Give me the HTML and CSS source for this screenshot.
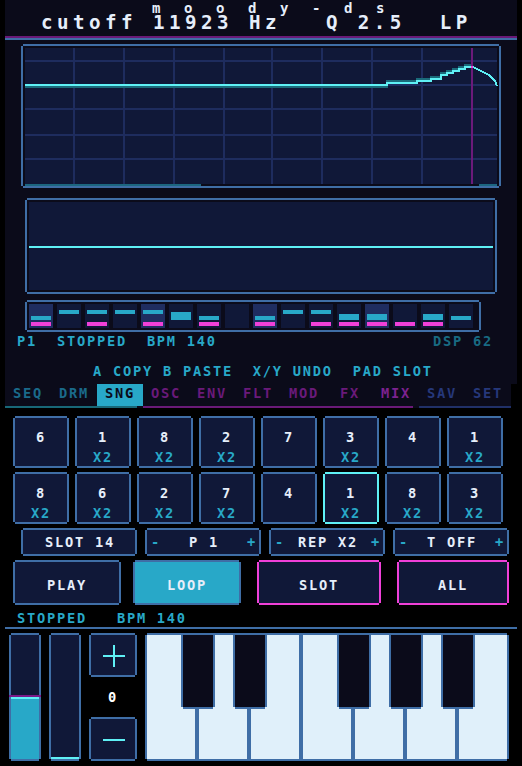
FILE: index.html
```html
<!DOCTYPE html>
<html lang="en">
<head>
<meta charset="utf-8">
<title>moody-ds</title>
<link rel="stylesheet" href="styles.css">
</head>
<body>
<div class="screen">
  <section class="top">
    <div class="deck">
      <div class="title">m o o d y - d s</div>
      <div class="readout"><span>cutoff 11923 Hz</span><span class="ro-q">Q 2.5</span><span class="ro-mode">LP</span></div>
      <div class="rule rule-purple"></div>
      <div class="rule rule-blue"></div>

      <div class="scope px">
        <svg width="476" height="140" viewBox="23 46 476 140" shape-rendering="crispEdges">
          <rect x="23" y="46" width="476" height="140" fill="#0b0b1a"/>
          <rect x="25" y="48" width="472" height="136" fill="#101838"/>
          <g fill="#1e2c5e">
            <rect x="73" y="48" width="2" height="136"/>
            <rect x="123" y="48" width="2" height="136"/>
            <rect x="173" y="48" width="2" height="136"/>
            <rect x="223" y="48" width="2" height="136"/>
            <rect x="271" y="48" width="2" height="136"/>
            <rect x="321" y="48" width="2" height="136"/>
            <rect x="371" y="48" width="2" height="136"/>
            <rect x="421" y="48" width="2" height="136"/>
            <rect x="25" y="60" width="472" height="2"/>
            <rect x="25" y="84" width="472" height="2"/>
            <rect x="25" y="108" width="472" height="2"/>
            <rect x="25" y="134" width="472" height="2"/>
            <rect x="25" y="158" width="472" height="2"/>
          </g>
          <rect x="471" y="48" width="2" height="136" fill="#6c1a7a"/>
          <rect x="25" y="184" width="176" height="2" fill="#1c6680"/>
          <rect x="479" y="184" width="18" height="2" fill="#1c6680"/>
          <path d="M25 87 H388 M386 81 H417 V79 H431 V77 H441 V73 H447 V71 H453 V69 H459 V67 H465 V65 H471" fill="none" stroke="#1a6a7a" stroke-width="2"/>
          <path d="M25 85 H387 V83 H417 V81 H431 V79 H441 V75 H447 V73 H453 V71 H459 V69 H465 V67 H473 L477 69 L481 71 L485 73 L489 75 L491 77 L493 79 L495 81 L497 86" fill="none" stroke="#5ff0f5" stroke-width="2"/>
          <rect x="471" y="66" width="2" height="2" fill="#f040d8"/>
        </svg>
      </div>

      <div class="wave px"><div class="wave-in"><div class="wave-line"></div></div></div>

      <div class="steps px">
        <div class="step beat"><i class="note" style="margin-top:12px;height:4px"></i><i class="vel"></i></div>
        <div class="step"><i class="note" style="margin-top:6px;height:4px"></i></div>
        <div class="step"><i class="note" style="margin-top:6px;height:4px"></i><i class="vel"></i></div>
        <div class="step"><i class="note" style="margin-top:6px;height:4px"></i></div>
        <div class="step beat"><i class="note" style="margin-top:6px;height:4px"></i><i class="vel"></i></div>
        <div class="step"><i class="note" style="margin-top:8px;height:8px"></i></div>
        <div class="step"><i class="note" style="margin-top:12px;height:4px"></i><i class="vel"></i></div>
        <div class="step"></div>
        <div class="step beat"><i class="note" style="margin-top:12px;height:4px"></i><i class="vel"></i></div>
        <div class="step"><i class="note" style="margin-top:6px;height:4px"></i></div>
        <div class="step"><i class="note" style="margin-top:6px;height:4px"></i><i class="vel"></i></div>
        <div class="step"><i class="note" style="margin-top:10px;height:6px"></i><i class="vel"></i></div>
        <div class="step beat"><i class="note" style="margin-top:10px;height:6px"></i><i class="vel"></i></div>
        <div class="step"><i class="vel"></i></div>
        <div class="step"><i class="note" style="margin-top:10px;height:6px"></i><i class="vel"></i></div>
        <div class="step"><i class="note" style="margin-top:12px;height:4px"></i></div>
      </div>

      <div class="status"><span>P1  STOPPED  BPM 140</span><span class="dsp">DSP 62</span></div>
      <div class="hints">A COPY B PASTE  X/Y UNDO  PAD SLOT</div>
    </div>

    <nav class="tabs">
      <span class="tab t-seq">SEQ</span>
      <span class="tab t-seq">DRM</span>
      <span class="tab active">SNG</span>
      <span class="tab t-syn">OSC</span>
      <span class="tab t-syn">ENV</span>
      <span class="tab t-syn">FLT</span>
      <span class="tab t-syn">MOD</span>
      <span class="tab t-syn">FX</span>
      <span class="tab t-mix">MIX</span>
      <span class="tab t-sys">SAV</span>
      <span class="tab t-sys">SET</span>
    </nav>
    <div class="tab-lines"><i class="tl-seq"></i><i class="tl-syn"></i><i class="tl-sys"></i></div>
  </section>

  <section class="song">
    <div class="pads">
      <div class="pad px"><span>6</span></div>
      <div class="pad px"><span>1</span><span class="rep">X2</span></div>
      <div class="pad px"><span>8</span><span class="rep">X2</span></div>
      <div class="pad px"><span>2</span><span class="rep">X2</span></div>
      <div class="pad px"><span>7</span></div>
      <div class="pad px"><span>3</span><span class="rep">X2</span></div>
      <div class="pad px"><span>4</span></div>
      <div class="pad px"><span>1</span><span class="rep">X2</span></div>
      <div class="pad px"><span>8</span><span class="rep">X2</span></div>
      <div class="pad px"><span>6</span><span class="rep">X2</span></div>
      <div class="pad px"><span>2</span><span class="rep">X2</span></div>
      <div class="pad px"><span>7</span><span class="rep">X2</span></div>
      <div class="pad px"><span>4</span></div>
      <div class="pad px sel"><span>1</span><span class="rep">X2</span></div>
      <div class="pad px"><span>8</span><span class="rep">X2</span></div>
      <div class="pad px"><span>3</span><span class="rep">X2</span></div>
    </div>

    <div class="params">
      <div class="param px center"><span>SLOT 14</span></div>
      <div class="param px"><span class="pm">-</span><span>P 1</span><span class="pm">+</span></div>
      <div class="param px"><span class="pm">-</span><span>REP X2</span><span class="pm">+</span></div>
      <div class="param px"><span class="pm">-</span><span>T OFF</span><span class="pm">+</span></div>
    </div>

    <div class="transport">
      <div class="btn px b-play">PLAY</div>
      <div class="btn px b-loop">LOOP</div>
      <div class="btn px b-slot b-mag">SLOT</div>
      <div class="btn px b-all b-mag">ALL</div>
    </div>

    <div class="status2">STOPPED   BPM 140</div>
    <div class="divider"></div>

    <div class="play">
      <div class="slider px"><i class="mark"></i><i class="level" style="height:62px"></i></div>
      <div class="slider px"><i class="level-min"></i></div>
      <div class="octave">
        <div class="oct-btn px">
          <svg width="44" height="40" viewBox="0 0 44 40" shape-rendering="crispEdges"><rect x="22" y="10" width="2" height="22" fill="#5ff0f5"/><rect x="12" y="20" width="22" height="2" fill="#5ff0f5"/></svg>
        </div>
        <span class="oct-val">0</span>
        <div class="oct-btn px">
          <svg width="44" height="40" viewBox="0 0 44 40" shape-rendering="crispEdges"><rect x="12" y="20" width="22" height="2" fill="#5ff0f5"/></svg>
        </div>
      </div>
      <div class="keys px">
        <i class="white"></i><i class="white"></i><i class="white"></i><i class="white"></i><i class="white"></i><i class="white"></i><i class="white"></i>
        <i class="black k1"></i><i class="black k2"></i><i class="black k3"></i><i class="black k4"></i><i class="black k5"></i>
      </div>
    </div>
  </section>
</div>
</body>
</html>
```

FILE: styles.css
```css
* {
  box-sizing: border-box;
  margin: 0;
  padding: 0;
}

html,
body {
  background: #000;
}

body {
  width: 522px;
  height: 766px;
  overflow: hidden;
  font-family: "DejaVu Sans Mono", "Liberation Mono", monospace;
  font-weight: bold;
  color: #e6eefa;
}

/* small pixel-style caption text: 10px cell advance, 10px cap height */
.screen {
  font-size: 13.7px;
  letter-spacing: 1.75px;
  line-height: 10px;
}

/* runs of spaces are part of the column layout of these lines */
.title,
.readout,
.status,
.hints,
.status2,
.param,
.btn {
  white-space: pre;
}

i {
  display: block;
}

/* stepped corners on framed widgets */
.px {
  clip-path: polygon(2px 0, calc(100% - 2px) 0, calc(100% - 2px) 2px, 100% 2px,
    100% calc(100% - 2px), calc(100% - 2px) calc(100% - 2px), calc(100% - 2px) 100%,
    2px 100%, 2px calc(100% - 2px), 0 calc(100% - 2px), 0 2px, 2px 2px);
}

/* ---------- upper deck ---------- */
.top {
  margin-left: 5px;
}

.deck {
  width: 512px;
  background: #0b0b1a;
  padding-bottom: 8px;
}

.title {
  height: 15px;
  line-height: 16px;
  font-size: 14px;
  letter-spacing: 7.57px;
  padding-left: 147px;
}

.readout {
  display: flex;
  height: 15px;
  line-height: 15px;
  font-size: 19.2px;
  letter-spacing: 4.44px;
  padding-left: 36px;
}

.ro-q {
  margin-left: 45px;
}

.ro-mode {
  margin-left: 34px;
}

.rule {
  height: 2px;
}

.rule-purple {
  margin-top: 6px;
  background: #6a1a78;
}

.rule-blue {
  background: #3f6ea6;
}

.scope {
  margin: 4px 0 0 16px;
  width: 480px;
  height: 144px;
  border: 2px solid #3f6ea6;
}

.scope svg {
  display: block;
}

.wave {
  margin: 10px 0 0 20px;
  width: 472px;
  height: 96px;
  border: 2px solid #3f6ea6;
  padding: 2px;
}

.wave-in {
  height: 100%;
  background: #101838;
  padding-top: 44px;
}

.wave-line {
  height: 2px;
  background: #5ff0f5;
}

.steps {
  margin: 6px 0 0 20px;
  width: 456px;
  height: 32px;
  border: 2px solid #3f6ea6;
  padding: 2px 6px 2px 2px;
  display: flex;
  gap: 4px;
}

.step {
  width: 24px;
  height: 24px;
  flex: none;
  background: #101838;
  display: flex;
  flex-direction: column;
  padding: 0 2px 2px;
}

.step.beat {
  background: #1f2d60;
}

.note {
  flex: none;
  background: #28a8c8;
}

.vel {
  flex: none;
  height: 4px;
  margin-top: auto;
  background: #f040d8;
}

.status {
  margin-top: 4px;
  display: flex;
  justify-content: space-between;
  padding: 0 24px 0 12px;
  color: #28a8c8;
}

.dsp {
  color: #186a82;
}

.hints {
  margin-top: 20px;
  padding-left: 88px;
  color: #28a8c8;
}

/* ---------- page tabs ---------- */
.tabs {
  width: 506px;
  height: 22px;
  background: #0b0b1a;
  display: grid;
  grid-template-columns: repeat(11, 46px);
}

.tab {
  text-align: center;
  padding-top: 4px;
}

.t-seq {
  color: #1a6a8a;
}

.t-syn {
  color: #6a1a7a;
}

.t-mix {
  color: #7c2290;
}

.t-sys {
  color: #26387a;
}

.tab.active {
  background: #28a8c8;
  color: #0b0b1a;
}

.tab-lines {
  width: 506px;
  height: 2px;
  background: #0b0b1a;
  display: flex;
}

.tl-seq {
  width: 132px;
  background: #186878;
}

.tl-syn {
  width: 270px;
  margin-left: 6px;
  background: #6a1a78;
}

.tl-sys {
  width: 92px;
  margin-left: 6px;
  background: #203068;
}

/* ---------- song page ---------- */
.pads {
  margin: 8px 0 0 13px;
  display: grid;
  grid-template-columns: repeat(8, 56px);
  grid-auto-rows: 52px;
  column-gap: 6px;
  row-gap: 4px;
}

.pad {
  border: 2px solid #3f6ea6;
  background: #101838;
  display: flex;
  flex-direction: column;
  align-items: center;
  padding-top: 14px;
  gap: 10px;
}

.pad.sel {
  border-color: #5ff0f5;
}

.rep {
  color: #28a8c8;
}

.params {
  margin: 4px 0 0 21px;
  display: flex;
  gap: 8px;
}

.param {
  width: 116px;
  height: 28px;
  border: 2px solid #3f6ea6;
  background: #101838;
  display: flex;
  align-items: center;
  justify-content: space-between;
  padding: 0 2px 0 4px;
}

.param.center {
  justify-content: center;
}

.pm {
  color: #28a8c8;
}

.transport {
  margin: 4px 0 0 13px;
  display: flex;
  height: 45px;
}

.btn {
  border: 2px solid #3f6ea6;
  background: #101838;
  text-align: center;
  padding-top: 18px;
}

.b-play {
  width: 108px;
}

.b-loop {
  width: 108px;
  margin-left: 12px;
  background: #28a8c8;
}

.b-slot {
  width: 124px;
  margin-left: 16px;
}

.b-all {
  width: 112px;
  margin-left: 16px;
}

.b-mag {
  border-color: #f040d8;
}

.status2 {
  margin: 8px 0 0 17px;
  color: #28a8c8;
}

.divider {
  margin: 4px 0 0 5px;
  width: 512px;
  height: 2px;
  background: #3f6ea6;
}

/* ---------- performance strip ---------- */
.play {
  margin: 4px 0 0 9px;
  display: flex;
  gap: 8px;
  height: 128px;
}

.slider {
  width: 32px;
  height: 128px;
  border: 2px solid #3f6ea6;
  background: #101838;
  display: flex;
  flex-direction: column;
  justify-content: flex-end;
}

.mark {
  flex: none;
  height: 2px;
  margin: 0 -2px;
  background: #7a1a88;
}

.level {
  flex: none;
  background: #28a8c8;
  border-top: 2px solid #5ff0f5;
}

.level-min {
  flex: none;
  height: 2px;
  background: #5ff0f5;
}

.octave {
  width: 48px;
  display: flex;
  flex-direction: column;
  justify-content: space-between;
  align-items: center;
}

.oct-btn {
  width: 48px;
  height: 44px;
  border: 2px solid #3f6ea6;
  background: #101838;
}

.oct-btn svg {
  display: block;
}

.oct-val {
  color: #fff;
}

.keys {
  position: relative;
  width: 364px;
  height: 128px;
  background: #3f6ea6;
  padding: 2px;
  display: flex;
  gap: 4px;
}

.white {
  flex: 1;
  background: #e0f0fa;
}

/* sharps sit over the naturals */
.black {
  position: absolute;
  top: 0;
  width: 34px;
  height: 76px;
  background: #0b0b1a;
  border: 2px solid #3f6ea6;
  clip-path: polygon(0 0, 100% 0, 100% calc(100% - 2px), calc(100% - 2px) calc(100% - 2px),
    calc(100% - 2px) 100%, 2px 100%, 2px calc(100% - 2px), 0 calc(100% - 2px));
}

.k1 { left: 36px; }
.k2 { left: 88px; }
.k3 { left: 192px; }
.k4 { left: 244px; }
.k5 { left: 296px; }
```
